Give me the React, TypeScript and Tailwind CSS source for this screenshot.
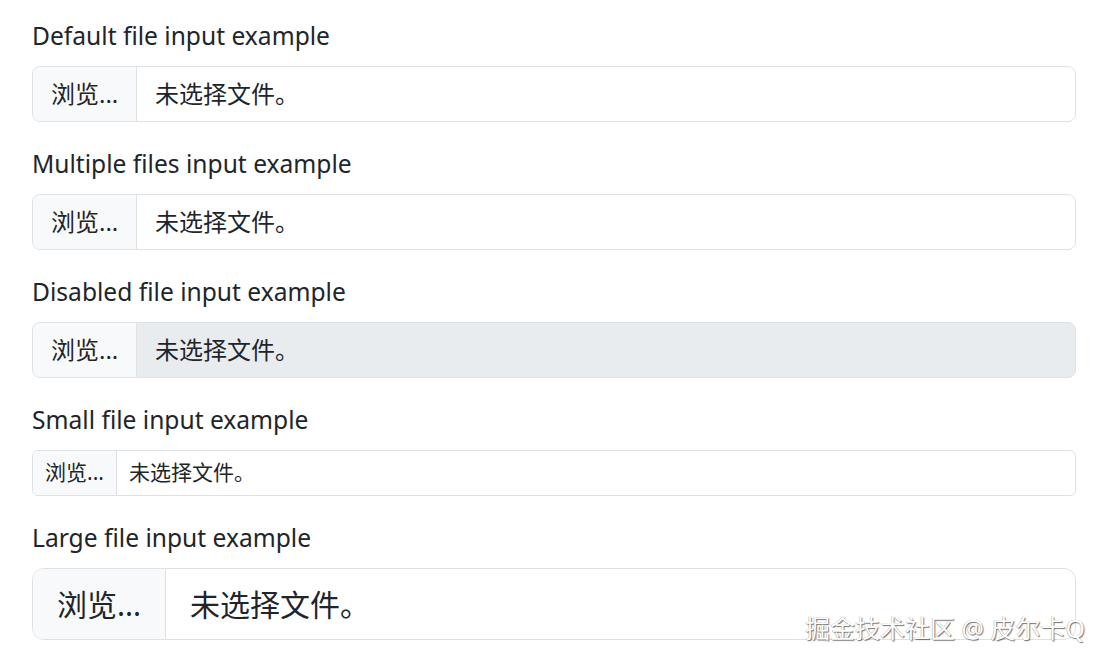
import React from 'react';

const FONT = '"Noto Sans", "Noto Sans CJK SC", sans-serif';

type Size = 'sm' | 'md' | 'lg';

const SIZES: Record<Size, { box: string; btn: string; field: string }> = {
  sm: { box: 'h-[46px] text-[21px] rounded-[6px]', btn: 'w-[84px] pl-[12px]', field: 'pl-[12px]' },
  md: { box: 'h-[56px] text-[24px] rounded-[8px]', btn: 'w-[104px] pl-[18px]', field: 'pl-[18px]' },
  lg: { box: 'h-[72px] text-[30px] rounded-[12px]', btn: 'w-[133px] pl-[24px]', field: 'pl-[24px]' },
};

function FileInput({ size = 'md', disabled = false }: { size?: Size; disabled?: boolean }) {
  const s = SIZES[size];
  return (
    <div className={`flex w-[1044px] overflow-hidden border border-[#dee2e6] text-[#212529] ${s.box} ${disabled ? 'bg-[#e9ecef]' : 'bg-white'}`}>
      <div className={`flex items-center shrink-0 bg-[#f8f9fa] border-r border-[#dee2e6] ${s.btn}`}>浏览...</div>
      <div className={`flex items-center ${s.field}`}>未选择文件。</div>
    </div>
  );
}

function Field({ label, size, disabled }: { label: string; size?: Size; disabled?: boolean }) {
  return (
    <div className="mb-[24px]">
      <div className="text-[24.6px] leading-[36px] text-[#212529] mb-[12px]">{label}</div>
      <FileInput size={size} disabled={disabled} />
    </div>
  );
}

export default function App() {
  return (
    <div className="relative w-[1104px] h-[663px] bg-white overflow-hidden pl-[32px] pt-[18px]" style={{ fontFamily: FONT }}>
      <Field label="Default file input example" />
      <Field label="Multiple files input example" />
      <Field label="Disabled file input example" disabled />
      <Field label="Small file input example" size="sm" />
      <Field label="Large file input example" size="lg" />

      {/* watermark */}
      <div className="absolute right-[19px] top-[613px] text-[25px] leading-[30px] text-white [text-shadow:1px_1px_1px_rgba(0,0,0,0.55),-0.5px_-0.5px_0.5px_rgba(0,0,0,0.35)]">
        掘金技术社区 @ 皮尔卡Q
      </div>
    </div>
  );
}
